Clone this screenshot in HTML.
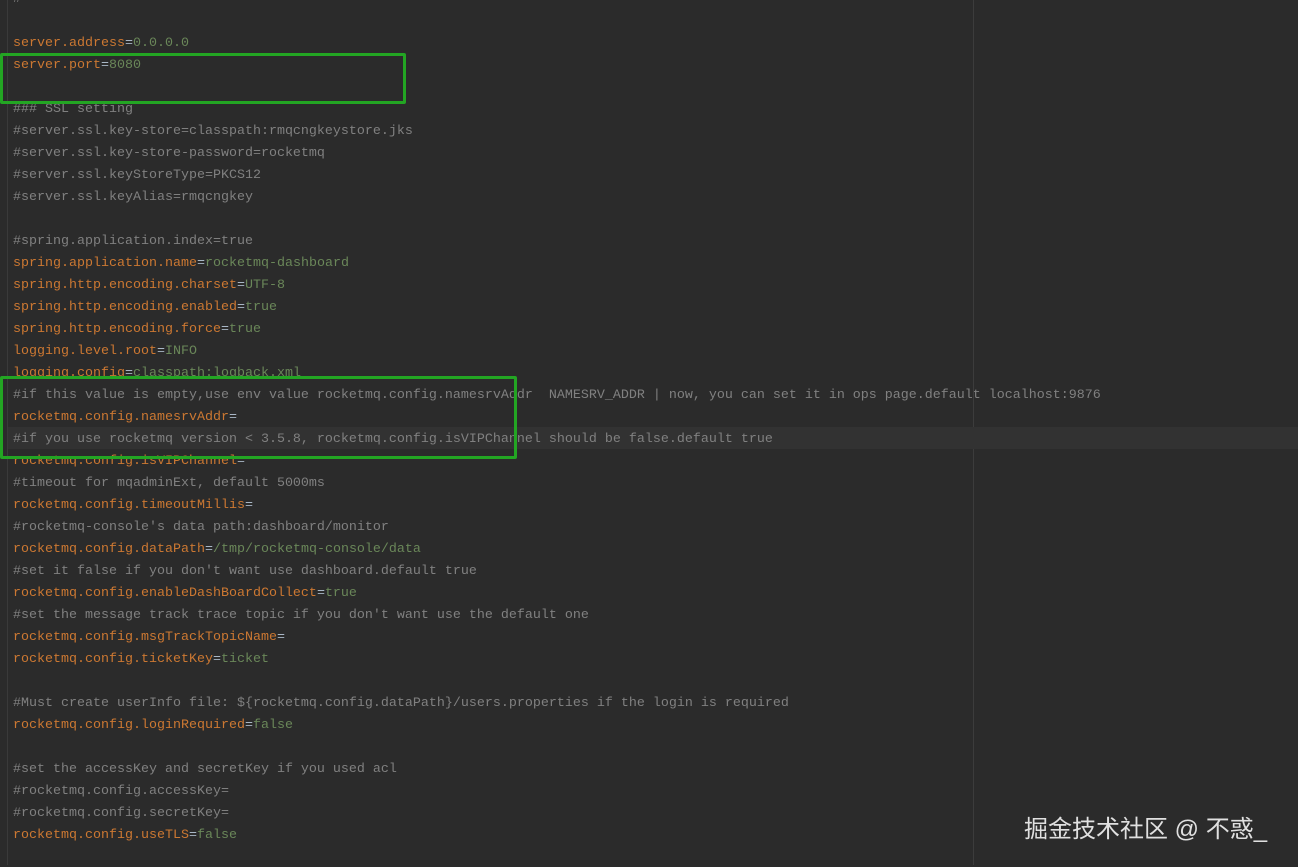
<!DOCTYPE html>
<html><head><meta charset="utf-8"><style>
html,body{margin:0;padding:0;}
body{width:1298px;height:865px;background:#2b2b2b;position:relative;overflow:hidden;font-family:"Liberation Mono",monospace;font-size:13.33px;}
.gut{position:absolute;left:7px;top:0;width:1px;height:865px;background:#3a3a3a;}
.rm{position:absolute;left:973px;top:0;width:1px;height:865px;background:#3c3c3c;}
.cur{position:absolute;left:8px;top:427px;width:1290px;height:22px;background:#323232;}
.w{position:absolute;left:0;top:2px;width:1298px;height:865px;}
.l{position:absolute;left:13px;height:22px;line-height:22px;white-space:pre;color:#808080;}
.k{color:#cc7832;}.v{color:#6a8759;}.c{color:#808080;}.e{color:#a9b7c6;}
.box{position:absolute;border:3px solid #23a523;box-sizing:border-box;border-radius:2px;}
.wm{position:absolute;left:1024px;top:809px;font-family:"Liberation Sans","Noto Sans CJK SC",sans-serif;font-size:24px;color:#e0e0e0;}
</style></head><body>
<div class="gut"></div><div class="rm"></div><div class="cur"></div>
<div class="w">
<div class="l" style="top:-13px">#</div>
<div class="l" style="top:31px"><span class="k">server.address</span><span class="e">=</span><span class="v">0.0.0.0</span></div>
<div class="l" style="top:53px"><span class="k">server.port</span><span class="e">=</span><span class="v">8080</span></div>
<div class="l" style="top:97px">### SSL setting</div>
<div class="l" style="top:119px">#server.ssl.key-store=classpath:rmqcngkeystore.jks</div>
<div class="l" style="top:141px">#server.ssl.key-store-password=rocketmq</div>
<div class="l" style="top:163px">#server.ssl.keyStoreType=PKCS12</div>
<div class="l" style="top:185px">#server.ssl.keyAlias=rmqcngkey</div>
<div class="l" style="top:229px">#spring.application.index=true</div>
<div class="l" style="top:251px"><span class="k">spring.application.name</span><span class="e">=</span><span class="v">rocketmq-dashboard</span></div>
<div class="l" style="top:273px"><span class="k">spring.http.encoding.charset</span><span class="e">=</span><span class="v">UTF-8</span></div>
<div class="l" style="top:295px"><span class="k">spring.http.encoding.enabled</span><span class="e">=</span><span class="v">true</span></div>
<div class="l" style="top:317px"><span class="k">spring.http.encoding.force</span><span class="e">=</span><span class="v">true</span></div>
<div class="l" style="top:339px"><span class="k">logging.level.root</span><span class="e">=</span><span class="v">INFO</span></div>
<div class="l" style="top:361px"><span class="k">logging.config</span><span class="e">=</span><span class="v">classpath:logback.xml</span></div>
<div class="l" style="top:383px">#if this value is empty,use env value rocketmq.config.namesrvAddr  NAMESRV_ADDR | now, you can set it in ops page.default localhost:9876</div>
<div class="l" style="top:405px"><span class="k">rocketmq.config.namesrvAddr</span><span class="e">=</span></div>
<div class="l" style="top:427px">#if you use rocketmq version &lt; 3.5.8, rocketmq.config.isVIPChannel should be false.default true</div>
<div class="l" style="top:449px"><span class="k">rocketmq.config.isVIPChannel</span><span class="e">=</span></div>
<div class="l" style="top:471px">#timeout for mqadminExt, default 5000ms</div>
<div class="l" style="top:493px"><span class="k">rocketmq.config.timeoutMillis</span><span class="e">=</span></div>
<div class="l" style="top:515px">#rocketmq-console's data path:dashboard/monitor</div>
<div class="l" style="top:537px"><span class="k">rocketmq.config.dataPath</span><span class="e">=</span><span class="v">/tmp/rocketmq-console/data</span></div>
<div class="l" style="top:559px">#set it false if you don't want use dashboard.default true</div>
<div class="l" style="top:581px"><span class="k">rocketmq.config.enableDashBoardCollect</span><span class="e">=</span><span class="v">true</span></div>
<div class="l" style="top:603px">#set the message track trace topic if you don't want use the default one</div>
<div class="l" style="top:625px"><span class="k">rocketmq.config.msgTrackTopicName</span><span class="e">=</span></div>
<div class="l" style="top:647px"><span class="k">rocketmq.config.ticketKey</span><span class="e">=</span><span class="v">ticket</span></div>
<div class="l" style="top:691px">#Must create userInfo file: ${rocketmq.config.dataPath}/users.properties if the login is required</div>
<div class="l" style="top:713px"><span class="k">rocketmq.config.loginRequired</span><span class="e">=</span><span class="v">false</span></div>
<div class="l" style="top:757px">#set the accessKey and secretKey if you used acl</div>
<div class="l" style="top:779px">#rocketmq.config.accessKey=</div>
<div class="l" style="top:801px">#rocketmq.config.secretKey=</div>
<div class="l" style="top:823px"><span class="k">rocketmq.config.useTLS</span><span class="e">=</span><span class="v">false</span></div>
</div>
<div class="box" style="left:0;top:53px;width:406px;height:51px"></div>
<div class="box" style="left:0;top:376px;width:517px;height:83px"></div>
<div class="wm">掘金技术社区 @ 不惑_</div>
</body></html>
